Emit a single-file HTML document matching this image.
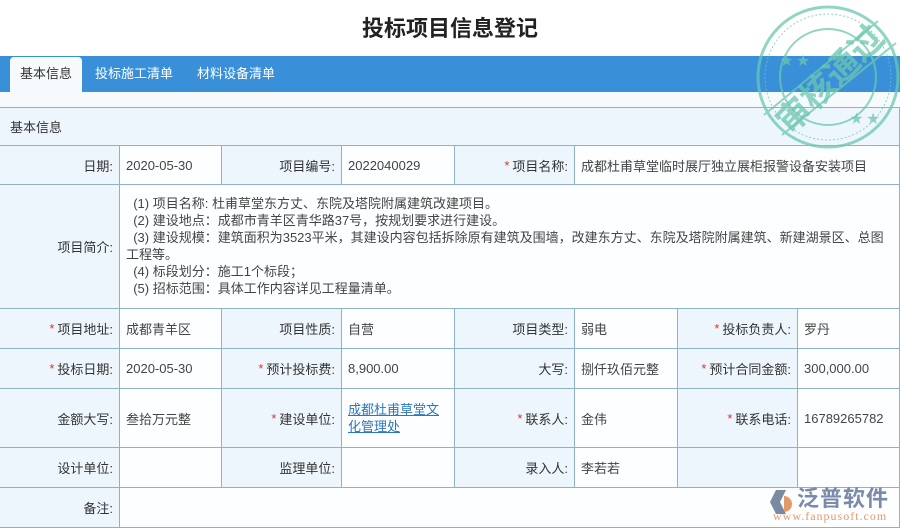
<!DOCTYPE html>
<html><head><meta charset="utf-8"><style>
*{margin:0;padding:0;box-sizing:border-box}
body{width:900px;height:529px;background:#fff;font-family:"Liberation Sans","Noto Sans CJK SC",sans-serif;font-size:13px;color:#333;position:relative;overflow:hidden}
.t{position:absolute;top:11px;left:0;width:900px;text-align:center;font-size:22px;font-weight:bold;color:#222}
.bar{position:absolute;top:56px;left:0;width:900px;height:36px;background:#3a90d8}
.tab{position:absolute;top:57px;height:35px;line-height:34px;font-size:13px;color:#fff}
.tab.a{background:#f6fafd;color:#333;border-radius:4px 4px 0 0;left:10px;width:72px;text-align:center}
.c{position:absolute;border-right:1px solid #8fb3c6;border-bottom:1px solid #8fb3c6;display:flex;align-items:center;padding:0 6px}
.l{background:#eef6fd;justify-content:flex-end;color:#333}
.v{background:#fcfeff;color:#444}
.s{color:#d33;margin-right:3px}
a{color:#2a78c0;text-decoration:underline}
</style></head><body>
<div class="t">投标项目信息登记</div>
<div class="bar"></div>
<div class="tab a">基本信息</div>
<div class="tab" style="left:95px">投标施工清单</div>
<div class="tab" style="left:197px">材料设备清单</div>
<div style="position:absolute;top:92px;left:0;width:900px;height:15px;background:#f6fafd"></div>
<div style="position:absolute;top:107px;left:0;width:900px;border-top:1px solid #8fb3c6"></div>
<div class="c l" style="top:108px;left:0;width:900px;height:38px;justify-content:flex-start;padding-left:10px;background:#eef6fd">基本信息</div>

<div class="c l" style="top:146px;left:0;width:120px;height:39px">日期:</div>
<div class="c v" style="top:146px;left:120px;width:102px;height:39px">2020-05-30</div>
<div class="c l" style="top:146px;left:222px;width:120px;height:39px">项目编号:</div>
<div class="c v" style="top:146px;left:342px;width:113px;height:39px">2022040029</div>
<div class="c l" style="top:146px;left:455px;width:120px;height:39px"><span class="s">*</span>项目名称:</div>
<div class="c v" style="top:146px;left:575px;width:325px;height:39px">成都杜甫草堂临时展厅独立展柜报警设备安装项目</div>

<div class="c l" style="top:185px;left:0;width:120px;height:124px">项目简介:</div>
<div class="c v" style="top:185px;left:120px;width:780px;height:124px;line-height:17px;display:block;padding:10px 8px 0 6px">&nbsp;&nbsp;(1) 项目名称: 杜甫草堂东方丈、东院及塔院附属建筑改建项目。<br>&nbsp;&nbsp;(2) 建设地点：成都市青羊区青华路37号，按规划要求进行建设。<br>&nbsp;&nbsp;(3) 建设规模：建筑面积为3523平米，其建设内容包括拆除原有建筑及围墙，改建东方丈、东院及塔院附属建筑、新建湖景区、总图工程等。<br>&nbsp;&nbsp;(4) 标段划分：施工1个标段；<br>&nbsp;&nbsp;(5) 招标范围：具体工作内容详见工程量清单。</div>

<div class="c l" style="top:309px;left:0;width:120px;height:40px"><span class="s">*</span>项目地址:</div>
<div class="c v" style="top:309px;left:120px;width:102px;height:40px">成都青羊区</div>
<div class="c l" style="top:309px;left:222px;width:120px;height:40px">项目性质:</div>
<div class="c v" style="top:309px;left:342px;width:113px;height:40px">自营</div>
<div class="c l" style="top:309px;left:455px;width:120px;height:40px">项目类型:</div>
<div class="c v" style="top:309px;left:575px;width:103px;height:40px">弱电</div>
<div class="c l" style="top:309px;left:678px;width:120px;height:40px"><span class="s">*</span>投标负责人:</div>
<div class="c v" style="top:309px;left:798px;width:102px;height:40px">罗丹</div>

<div class="c l" style="top:349px;left:0;width:120px;height:40px"><span class="s">*</span>投标日期:</div>
<div class="c v" style="top:349px;left:120px;width:102px;height:40px">2020-05-30</div>
<div class="c l" style="top:349px;left:222px;width:120px;height:40px"><span class="s">*</span>预计投标费:</div>
<div class="c v" style="top:349px;left:342px;width:113px;height:40px">8,900.00</div>
<div class="c l" style="top:349px;left:455px;width:120px;height:40px">大写:</div>
<div class="c v" style="top:349px;left:575px;width:103px;height:40px">捌仟玖佰元整</div>
<div class="c l" style="top:349px;left:678px;width:120px;height:40px"><span class="s">*</span>预计合同金额:</div>
<div class="c v" style="top:349px;left:798px;width:102px;height:40px">300,000.00</div>

<div class="c l" style="top:389px;left:0;width:120px;height:59px">金额大写:</div>
<div class="c v" style="top:389px;left:120px;width:102px;height:59px">叁拾万元整</div>
<div class="c l" style="top:389px;left:222px;width:120px;height:59px"><span class="s">*</span>建设单位:</div>
<div class="c v" style="top:389px;left:342px;width:113px;height:59px;line-height:17px"><a>成都杜甫草堂文化管理处</a></div>
<div class="c l" style="top:389px;left:455px;width:120px;height:59px"><span class="s">*</span>联系人:</div>
<div class="c v" style="top:389px;left:575px;width:103px;height:59px">金伟</div>
<div class="c l" style="top:389px;left:678px;width:120px;height:59px"><span class="s">*</span>联系电话:</div>
<div class="c v" style="top:389px;left:798px;width:102px;height:59px">16789265782</div>

<div class="c l" style="top:448px;left:0;width:120px;height:40px">设计单位:</div>
<div class="c v" style="top:448px;left:120px;width:102px;height:40px"></div>
<div class="c l" style="top:448px;left:222px;width:120px;height:40px">监理单位:</div>
<div class="c v" style="top:448px;left:342px;width:113px;height:40px"></div>
<div class="c l" style="top:448px;left:455px;width:120px;height:40px">录入人:</div>
<div class="c v" style="top:448px;left:575px;width:103px;height:40px">李若若</div>
<div class="c l" style="top:448px;left:678px;width:120px;height:40px"></div>
<div class="c v" style="top:448px;left:798px;width:102px;height:40px"></div>

<div class="c l" style="top:488px;left:0;width:120px;height:40px">备注:</div>
<div class="c v" style="top:488px;left:120px;width:780px;height:40px"></div>

<svg style="position:absolute;left:750px;top:3px" width="150" height="148" viewBox="0 0 150 148">
<g fill="none" stroke="#6cc7b0" opacity="0.75">
<circle cx="78" cy="74" r="70" stroke-width="3"/>
<circle cx="78" cy="74" r="63" stroke-width="1" stroke-dasharray="2 2"/>
<circle cx="78" cy="74" r="48" stroke-width="2"/>
<line x1="14" y1="112" x2="128" y2="18" stroke-width="2"/>
<line x1="32" y1="132" x2="146" y2="40" stroke-width="2"/>
</g>
<text x="80" y="88" font-size="34" font-weight="bold" fill="#6cc7b0" opacity="0.75" text-anchor="middle" transform="rotate(-45 80 76)" font-family="Noto Sans CJK SC,sans-serif">审核通过</text>
<text x="30" y="62" font-size="13" fill="#6cc7b0" opacity="0.75">★ ★</text>
<text x="100" y="120" font-size="13" fill="#6cc7b0" opacity="0.75">★ ★</text>
</svg>

<svg style="position:absolute;left:768px;top:486px" width="30" height="32" viewBox="0 0 30 32">
<path d="M8 4 L18 4 L12 16 L18 28 L8 28 L2 16Z" fill="#7a8aa0"/>
<path d="M16 10 A8 8 0 1 1 16 26" fill="#e39a6a"/>
</svg>
<div style="position:absolute;left:797px;top:481px;font-size:22px;color:#7a8aa8;font-family:'Noto Sans CJK SC',sans-serif;font-weight:bold;letter-spacing:1px">泛普软件</div>
<div style="position:absolute;left:773px;top:509px;font-size:12px;color:#e39a6a;font-family:'Liberation Serif',serif;letter-spacing:1px">www.fanpusoft.com</div>
</body></html>
